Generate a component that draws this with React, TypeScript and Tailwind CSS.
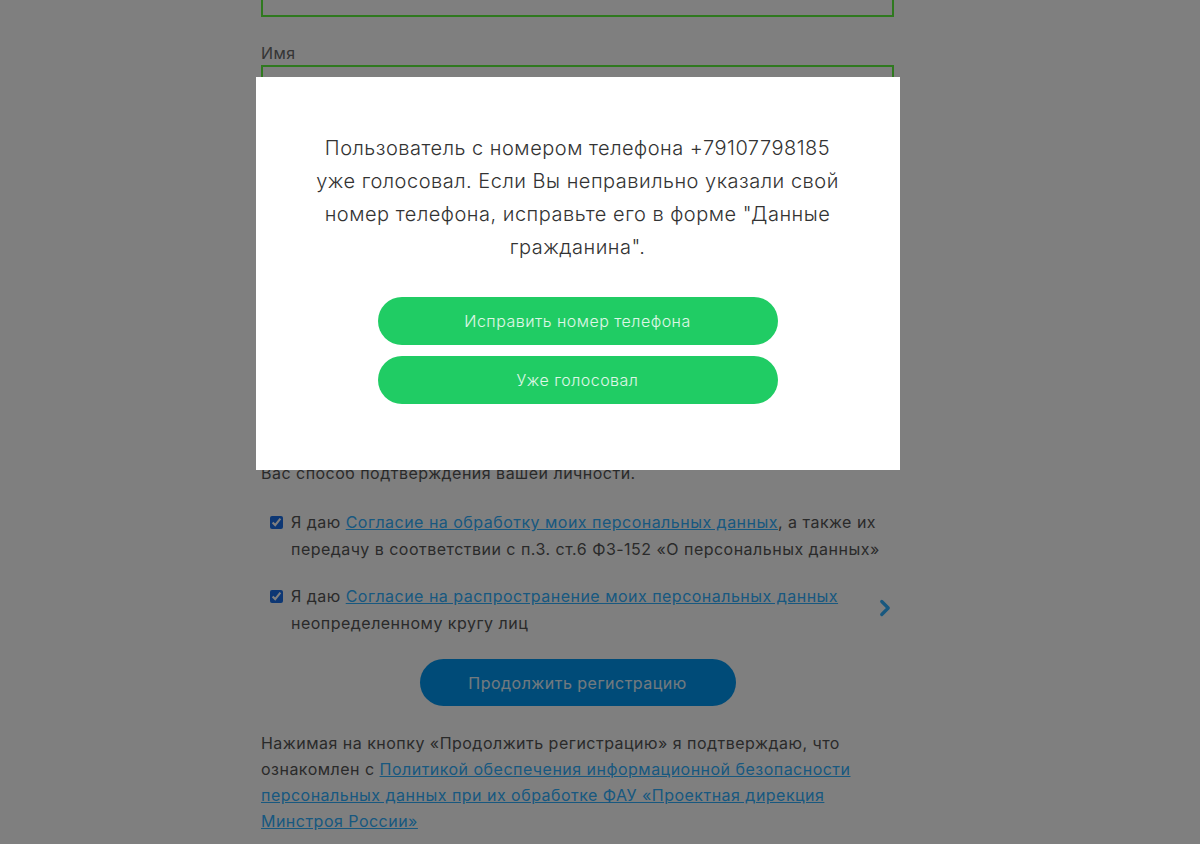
import React from "react";
import { ChevronRight } from "lucide-react";

const font = { fontFamily: "Inter, 'Noto Sans', sans-serif" };

function Field({ label }: { label: string }) {
  return (
    <div className="flex flex-col gap-[2px]">
      <label className="text-[16px] leading-[20px] text-[#6a6a6a]">{label}</label>
      <div className="h-[50px] border-2 border-[#5ef23e] bg-white" />
    </div>
  );
}

export default function App() {
  return (
    <div className="relative min-h-screen bg-white overflow-hidden" style={font}>
      <div className="w-[1155px]">
        <div className="mx-auto w-[633px] mt-[-34px] text-[#555] text-[16px] tracking-[0.03em]">
          <div className="h-[51px] border-2 border-[#5ef23e] bg-white" />
          <div className="mt-[26px]">
            <Field label="Имя" />
          </div>
          <div className="mt-[24px] flex flex-col gap-[24px] h-[280px] overflow-hidden">
            <Field label="Отчество" />
            <Field label="Телефон" />
            <Field label="Электронная почта" />
          </div>
          <p className="leading-[27px] mt-[14px] whitespace-nowrap">
            Для подтверждения учетной записи выберите удобный для
            <br />
            Вас способ подтверждения вашей личности.
          </p>

          <div className="mt-[22px] flex flex-col gap-[20px] relative">
            <label className="flex items-start gap-[8px] pl-[9px] leading-[27px] whitespace-nowrap">
              <input type="checkbox" defaultChecked className="mt-[7px] w-[13px] h-[13px] shrink-0 accent-[#1a6ee8]" />
              <span>
                Я даю{" "}
                <a href="#" className="text-[#30b0ff] underline">Согласие на обработку моих персональных данных</a>, а также их
                <br />
                передачу в соответствии с п.3. ст.6 ФЗ-152 «О персональных данных»
              </span>
            </label>
            <label className="flex items-start gap-[8px] pl-[9px] leading-[27px] whitespace-nowrap">
              <input type="checkbox" defaultChecked className="mt-[7px] w-[13px] h-[13px] shrink-0 accent-[#1a6ee8]" />
              <span>
                Я даю{" "}
                <a href="#" className="text-[#30b0ff] underline">Согласие на распространение моих персональных данных</a>
                <br />
                неопределенному кругу лиц
              </span>
            </label>
            <ChevronRight className="absolute right-[-4px] top-[86px] text-[#30b0ff]" size={26} strokeWidth={3} />
          </div>

          <div className="mt-[22px] flex justify-center">
            <button className="w-[316px] h-[47px] rounded-full bg-[#0096f0] text-white/90 text-[16px]">
              Продолжить регистрацию
            </button>
          </div>

          <p className="mt-[24px] leading-[26px]">
            Нажимая на кнопку «Продолжить регистрацию» я подтверждаю, что
            <br />
            ознакомлен с{" "}
            <a href="#" className="text-[#30b0ff] underline">
              Политикой обеспечения информационной безопасности
              <br />
              персональных данных при их обработке ФАУ «Проектная дирекция
              <br />
              Минстроя России»
            </a>
          </p>
        </div>
      </div>

      <div className="fixed inset-0 bg-black/50">
        <div className="w-[1155px] pt-[77px]">
          <div className="mx-auto w-[644px] bg-white pt-[55px] pb-[66px] px-[40px]">
            <p className="text-center text-[20px] leading-[33px] text-[#333] font-light tracking-[0.025em]">
              Пользователь с номером телефона +79107798185
              <br />
              уже голосовал. Если Вы неправильно указали свой
              <br />
              номер телефона, исправьте его в форме "Данные
              <br />
              гражданина".
            </p>
            <div className="mt-[33px] flex flex-col items-center gap-[11px]">
              <button className="w-[400px] h-[48px] rounded-full bg-[#20cc64] text-white/85 text-[16px] font-light tracking-[0.03em]">
                Исправить номер телефона
              </button>
              <button className="w-[400px] h-[48px] rounded-full bg-[#20cc64] text-white/85 text-[16px] font-light tracking-[0.03em]">
                Уже голосовал
              </button>
            </div>
          </div>
        </div>
      </div>
    </div>
  );
}
